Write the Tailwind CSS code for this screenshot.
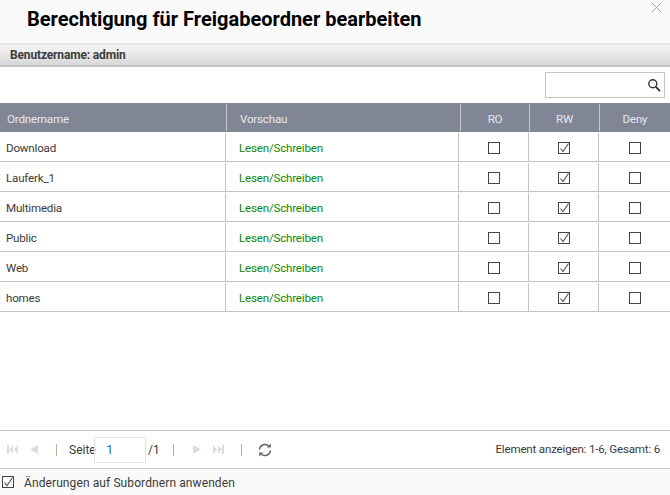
<!DOCTYPE html>
<html><head><meta charset="utf-8"><script src="https://cdn.jsdelivr.net/npm/@tailwindcss/browser@4"></script></head>
<body class="m-0 bg-white">
<div class="w-[670px] h-[495px] flex flex-col overflow-hidden font-['Roboto',sans-serif] text-[#3a3a3a] text-[11.6px] tracking-[-0.2px] relative">
  <div class="h-[43px] shrink-0 bg-[#fafafa] pl-[27px] pt-[5px] text-[20px] tracking-normal leading-[28px] font-bold text-black">Berechtigung für Freigabeordner bearbeiten</div>
  <svg class="absolute left-[651px] top-[2px]" width="11" height="11" viewBox="0 0 11 11"><path d="M0.5 0.5L10.5 10.5M10.5 0.5L0.5 10.5" stroke="#a8a8a8" stroke-width="1" fill="none"/></svg>
  <div class="h-[24px] shrink-0 border-t-2 border-t-[#e6e6e6] border-b-2 border-b-[#c4c4c4] bg-linear-to-b from-[#f6f6f6] to-[#d8d8d8] pl-[10px] text-[12px] tracking-[-0.15px] leading-[20px] font-bold text-[#3c3c3c]">Benutzername: admin</div>
  <div class="h-[36px] shrink-0 flex justify-end items-start pt-[5px] pr-[5px]">
    <div class="w-[120px] h-[26px] border border-[#c4c4c4] flex items-center justify-end pr-[3px]">
      <svg width="14" height="14" viewBox="0 0 14 14" fill="none"><circle cx="5.8" cy="5.8" r="4" stroke="#333" stroke-width="1.4"/><path d="M8.8 8.8L13 13" stroke="#333" stroke-width="1.8"/></svg>
    </div>
  </div>
  <div class="h-[29px] shrink-0 flex bg-[#808696] text-[#e6e8ec] leading-[32px]">
    <div class="w-[226px] pl-[7px]">Ordnername</div>
    <div class="w-[234px] pl-[13px] border-l border-l-[#c8c8c8] my-[1px] leading-[30px]">Vorschau</div>
    <div class="w-[69px] text-center border-l border-l-[#c8c8c8] my-[1px] leading-[30px]">RO</div>
    <div class="w-[70px] text-center border-l border-l-[#c8c8c8] my-[1px] leading-[30px]">RW</div>
    <div class="w-[71px] text-center border-l border-l-[#c8c8c8] my-[1px] leading-[30px]">Deny</div>
  </div>

  <div class="h-[30px] shrink-0 flex border-b border-b-[#c4c4c4]">
    <div class="w-[225px] pl-[6px] leading-[32px]">Download</div>
    <div class="w-[233px] pl-[13px] leading-[31px] border-l border-l-[#c4c4c4] mt-[1px] text-[#0a8a0a]">Lesen/Schreiben</div>
    <div class="w-[70px] pt-[1px] border-l border-l-[#c4c4c4] mt-[1px] flex items-center justify-center"><div class="w-[12px] h-[12px] border border-[#444]"></div></div>
    <div class="w-[70px] pt-[1px] border-l border-l-[#c4c4c4] mt-[1px] flex items-center justify-center"><div class="w-[12px] h-[12px] border border-[#444] relative"><svg class="absolute left-0 top-0" width="10" height="10" viewBox="0 0 10 10" fill="none"><path d="M1.5 5.5L4 8.5L9.5 0.5" stroke="#555" stroke-width="1.1"/></svg></div></div>
    <div class="w-[72px] pt-[1px] border-l border-l-[#c4c4c4] mt-[1px] flex items-center justify-center"><div class="w-[12px] h-[12px] border border-[#444]"></div></div>
  </div>
  <div class="h-[30px] shrink-0 flex border-b border-b-[#c4c4c4]">
    <div class="w-[225px] pl-[6px] leading-[32px]">Lauferk_1</div>
    <div class="w-[233px] pl-[13px] leading-[31px] border-l border-l-[#c4c4c4] mt-[1px] text-[#0a8a0a]">Lesen/Schreiben</div>
    <div class="w-[70px] pt-[1px] border-l border-l-[#c4c4c4] mt-[1px] flex items-center justify-center"><div class="w-[12px] h-[12px] border border-[#444]"></div></div>
    <div class="w-[70px] pt-[1px] border-l border-l-[#c4c4c4] mt-[1px] flex items-center justify-center"><div class="w-[12px] h-[12px] border border-[#444] relative"><svg class="absolute left-0 top-0" width="10" height="10" viewBox="0 0 10 10" fill="none"><path d="M1.5 5.5L4 8.5L9.5 0.5" stroke="#555" stroke-width="1.1"/></svg></div></div>
    <div class="w-[72px] pt-[1px] border-l border-l-[#c4c4c4] mt-[1px] flex items-center justify-center"><div class="w-[12px] h-[12px] border border-[#444]"></div></div>
  </div>
  <div class="h-[30px] shrink-0 flex border-b border-b-[#c4c4c4]">
    <div class="w-[225px] pl-[6px] leading-[32px]">Multimedia</div>
    <div class="w-[233px] pl-[13px] leading-[31px] border-l border-l-[#c4c4c4] mt-[1px] text-[#0a8a0a]">Lesen/Schreiben</div>
    <div class="w-[70px] pt-[1px] border-l border-l-[#c4c4c4] mt-[1px] flex items-center justify-center"><div class="w-[12px] h-[12px] border border-[#444]"></div></div>
    <div class="w-[70px] pt-[1px] border-l border-l-[#c4c4c4] mt-[1px] flex items-center justify-center"><div class="w-[12px] h-[12px] border border-[#444] relative"><svg class="absolute left-0 top-0" width="10" height="10" viewBox="0 0 10 10" fill="none"><path d="M1.5 5.5L4 8.5L9.5 0.5" stroke="#555" stroke-width="1.1"/></svg></div></div>
    <div class="w-[72px] pt-[1px] border-l border-l-[#c4c4c4] mt-[1px] flex items-center justify-center"><div class="w-[12px] h-[12px] border border-[#444]"></div></div>
  </div>
  <div class="h-[30px] shrink-0 flex border-b border-b-[#c4c4c4]">
    <div class="w-[225px] pl-[6px] leading-[32px]">Public</div>
    <div class="w-[233px] pl-[13px] leading-[31px] border-l border-l-[#c4c4c4] mt-[1px] text-[#0a8a0a]">Lesen/Schreiben</div>
    <div class="w-[70px] pt-[1px] border-l border-l-[#c4c4c4] mt-[1px] flex items-center justify-center"><div class="w-[12px] h-[12px] border border-[#444]"></div></div>
    <div class="w-[70px] pt-[1px] border-l border-l-[#c4c4c4] mt-[1px] flex items-center justify-center"><div class="w-[12px] h-[12px] border border-[#444] relative"><svg class="absolute left-0 top-0" width="10" height="10" viewBox="0 0 10 10" fill="none"><path d="M1.5 5.5L4 8.5L9.5 0.5" stroke="#555" stroke-width="1.1"/></svg></div></div>
    <div class="w-[72px] pt-[1px] border-l border-l-[#c4c4c4] mt-[1px] flex items-center justify-center"><div class="w-[12px] h-[12px] border border-[#444]"></div></div>
  </div>
  <div class="h-[30px] shrink-0 flex border-b border-b-[#c4c4c4]">
    <div class="w-[225px] pl-[6px] leading-[32px]">Web</div>
    <div class="w-[233px] pl-[13px] leading-[31px] border-l border-l-[#c4c4c4] mt-[1px] text-[#0a8a0a]">Lesen/Schreiben</div>
    <div class="w-[70px] pt-[1px] border-l border-l-[#c4c4c4] mt-[1px] flex items-center justify-center"><div class="w-[12px] h-[12px] border border-[#444]"></div></div>
    <div class="w-[70px] pt-[1px] border-l border-l-[#c4c4c4] mt-[1px] flex items-center justify-center"><div class="w-[12px] h-[12px] border border-[#444] relative"><svg class="absolute left-0 top-0" width="10" height="10" viewBox="0 0 10 10" fill="none"><path d="M1.5 5.5L4 8.5L9.5 0.5" stroke="#555" stroke-width="1.1"/></svg></div></div>
    <div class="w-[72px] pt-[1px] border-l border-l-[#c4c4c4] mt-[1px] flex items-center justify-center"><div class="w-[12px] h-[12px] border border-[#444]"></div></div>
  </div>
  <div class="h-[30px] shrink-0 flex border-b border-b-[#c4c4c4]">
    <div class="w-[225px] pl-[6px] leading-[32px]">homes</div>
    <div class="w-[233px] pl-[13px] leading-[31px] border-l border-l-[#c4c4c4] mt-[1px] text-[#0a8a0a]">Lesen/Schreiben</div>
    <div class="w-[70px] pt-[1px] border-l border-l-[#c4c4c4] mt-[1px] flex items-center justify-center"><div class="w-[12px] h-[12px] border border-[#444]"></div></div>
    <div class="w-[70px] pt-[1px] border-l border-l-[#c4c4c4] mt-[1px] flex items-center justify-center"><div class="w-[12px] h-[12px] border border-[#444] relative"><svg class="absolute left-0 top-0" width="10" height="10" viewBox="0 0 10 10" fill="none"><path d="M1.5 5.5L4 8.5L9.5 0.5" stroke="#555" stroke-width="1.1"/></svg></div></div>
    <div class="w-[72px] pt-[1px] border-l border-l-[#c4c4c4] mt-[1px] flex items-center justify-center"><div class="w-[12px] h-[12px] border border-[#444]"></div></div>
  </div>

  <div class="flex-1"></div>

  <div class="h-[38px] shrink-0 border-t border-t-[#c4c4c4] flex items-center relative">
    <svg class="ml-[7px]" width="11" height="11" viewBox="0 0 11 11" fill="#dcdcdc"><rect x="0" y="1" width="2" height="9"/><path d="M6 1V10L2 5.5Z"/><path d="M11 1V10L7 5.5Z"/></svg>
    <svg class="ml-[12px]" width="8" height="11" viewBox="0 0 8 11" fill="#dcdcdc"><path d="M8 1V10L0 5.5Z"/></svg>
    <div class="ml-[18px] w-px h-[12px] bg-[#b5b0a0]"></div>
    <span class="ml-[12px] w-[25px] text-[12px] tracking-normal">Seite</span>
    <div class="w-[52px] h-[26px] border border-[#e2e2e2] pl-[11px] leading-[24px] text-[#2a6fc9] text-[13px]">1</div>
    <span class="ml-[2px] text-[12px] tracking-normal">/1</span>
    <div class="ml-[13px] w-px h-[12px] bg-[#b5b0a0]"></div>
    <svg class="ml-[19px]" width="8" height="11" viewBox="0 0 8 11" fill="#dcdcdc"><path d="M0 1V10L8 5.5Z"/></svg>
    <svg class="ml-[12px]" width="11" height="11" viewBox="0 0 11 11" fill="#dcdcdc"><path d="M0 1V10L4 5.5Z"/><path d="M5 1V10L9 5.5Z"/><rect x="9" y="1" width="2" height="9"/></svg>
    <div class="ml-[17px] w-px h-[12px] bg-[#b5b0a0]"></div>
    <svg class="ml-[16px]" width="14" height="14" viewBox="0 0 14 14" fill="none"><path d="M1.5 6.5A5.5 5.5 0 0 1 11 3.2" stroke="#666" stroke-width="1.5"/><path d="M12.5 7.5A5.5 5.5 0 0 1 3 10.8" stroke="#666" stroke-width="1.5"/><path d="M12.8 0.6V4.6H8.8Z" fill="#666"/><path d="M1.2 13.4V9.4H5.2Z" fill="#666"/></svg>
    <span class="ml-auto mr-[10px]">Element anzeigen: 1-6, Gesamt: 6</span>
  </div>
  <div class="h-[27px] shrink-0 border-t border-t-[#c4c4c4] bg-[#f9f9f9] flex items-center pl-[2px] text-[12px] tracking-[0.1px]">
    <div class="w-[12px] h-[12px] border border-[#444] relative"><svg class="absolute left-0 top-0" width="10" height="10" viewBox="0 0 10 10" fill="none"><path d="M1.5 5.5L4 8.5L9.5 0.5" stroke="#555" stroke-width="1.1"/></svg></div>
    <span class="ml-[10px] leading-[18px] pt-[1px]">Änderungen auf Subordnern anwenden</span>
  </div>
</div>
</body></html>
